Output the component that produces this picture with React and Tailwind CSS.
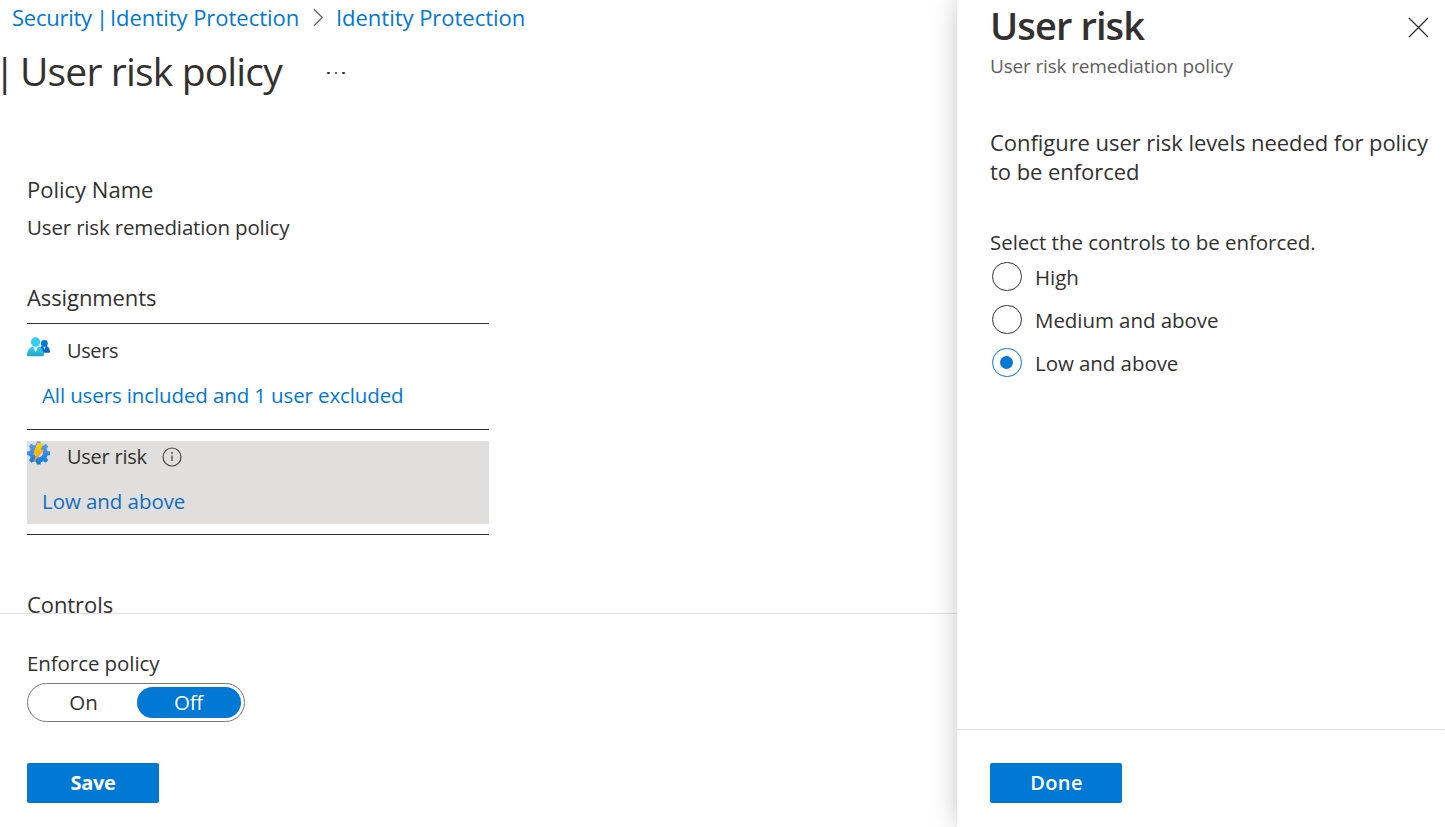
import React, { useState } from "react";

function ChevronIcon() {
  return (
    <svg className="shrink-0" width="12" height="20" viewBox="0 0 12 20" fill="none" stroke="#605e5c" strokeWidth="1.2">
      <path d="M1 2.300 L9.300 10.500 L1 18.700" />
    </svg>
  );
}

function UsersIcon() {
  return (
    <svg className="mt-[2px] shrink-0" width="24" height="20" viewBox="0 0 24 20">
      <defs>
        <linearGradient id="front" x1="0" y1="0" x2="0" y2="1">
          <stop offset="0" stopColor="#35d3f2" />
          <stop offset="1" stopColor="#22a5cb" />
        </linearGradient>
        <linearGradient id="back" x1="0" y1="0" x2="0" y2="1">
          <stop offset="0" stopColor="#0078d4" />
          <stop offset="1" stopColor="#1160c0" />
        </linearGradient>
      </defs>
      <path d="M21.8 15.8c.8 0 1.300-.6 1.200-1.400-.5-3.600-2-6-5.700-6s-5.300 2.600-5.700 7.400z" fill="url(#back)" />
      <path d="M15.700 8.700h3.400l-1.700 3.800z" fill="#fff" fillOpacity=".85" />
      <circle cx="17.400" cy="6.400" r="3.400" fill="#0078d4" />
      <path d="M15.500 19.300c1 0 1.700-.8 1.500-1.800C16.300 12.600 14 9.200 8.500 9.200S.7 12.600 0 17.500c-.1 1 .5 1.800 1.500 1.800z" fill="url(#front)" />
      <path d="M6.100 9.500h4.900l-2.400 6z" fill="#fff" fillOpacity=".9" />
      <circle cx="8.600" cy="5" r="4.700" fill="#32d0ef" />
    </svg>
  );
}

function RiskIcon() {
  return (
    <svg className="shrink-0" width="24" height="24" viewBox="0 0 24 24">
      <defs>
        <linearGradient id="gear" x1="0" y1="0" x2="0" y2="1">
          <stop offset="0" stopColor="#5ea0ef" />
          <stop offset="1" stopColor="#0f78d8" />
        </linearGradient>
        <linearGradient id="bolt" x1="0" y1="0" x2="0" y2="1">
          <stop offset="0" stopColor="#ffd400" />
          <stop offset="1" stopColor="#f78d1e" />
        </linearGradient>
      </defs>
      <path
        d="M9.800 .6h3.600l.7 3 2 .8 2.700-1.600 2.400 2.400-1.600 2.700.8 2 2.700.7v3.400l-2.700.7-.8 2 1.600 2.600-2.400 2.500-2.700-1.600-2 .8-.7 2.500H9.800l-.7-2.500-2-.8-2.700 1.600L2 19.300l1.600-2.600-.8-2L.2 14v-3.400l2.600-.7.8-2L2 5.200l2.400-2.400 2.700 1.600 2-.8z"
        fill="url(#gear)"
      />
      <circle cx="11.600" cy="12" r="4.300" fill="#cfe0f2" />
      <path d="M10.200 2.200h6.800l-3.600 6.600h3.800L6.400 22l3-8.600H5.900z" fill="url(#bolt)" />
    </svg>
  );
}

function InfoIcon() {
  return (
    <svg className="ml-[15.5px] shrink-0" width="20" height="20" viewBox="0 0 20 20" fill="none" stroke="#484644">
      <circle cx="10" cy="10" r="9" strokeWidth="1.200" />
      <path d="M10 8.500v5.500" strokeWidth="1.300" />
      <circle cx="10" cy="6" r=".9" fill="#484644" stroke="none" />
    </svg>
  );
}

const levels = ["High", "Medium and above", "Low and above"];

export default function App() {
  const [level, setLevel] = useState("Low and above");
  const [enforced, setEnforced] = useState(false);

  return (
    <div className="flex h-[827px] w-[1445px] overflow-hidden bg-white font-['Open_Sans','Noto_Sans',sans-serif] text-[#323130]">
      <main className="flex w-[957px] shrink-0 flex-col">
        <div className="h-[613px] shrink-0 overflow-hidden">
          <nav className="flex h-8 items-center pt-[2px] pl-3 text-[22px] leading-[30px] whitespace-nowrap text-[#0078d4]">
            <a className="flex w-[288px]">
              <span className="w-[84px] tracking-[-0.25px]">Security</span>
              <span className="w-[14px]">|</span>
              <span className="tracking-[-0.03px]">Identity Protection</span>
            </a>
            <span className="ml-[13px] flex w-[23px]"><ChevronIcon /></span>
            <a className="tracking-[-0.03px]">Identity Protection</a>
          </nav>

          <header className="mt-[13px] flex h-[52px] items-center whitespace-nowrap">
            <h1 className="flex text-[39px] leading-[52px] tracking-[-0.83px]">
              <span className="-ml-[6px] w-[26px]">|</span>
              <span className="w-[266px]">User risk policy</span>
            </h1>
            <span className="mt-[3px] ml-[41px] flex gap-[5px]">
              <i className="h-[2px] w-[2.500px] rounded-full bg-[#323130]" />
              <i className="h-[2px] w-[2.500px] rounded-full bg-[#323130]" />
              <i className="h-[2px] w-[2.500px] rounded-full bg-[#323130]" />
            </span>
          </header>

          <div className="ml-[27px] w-[462px] pt-[77px]">
            <h2 className="text-[22px] leading-[30px]">Policy Name</h2>
            <p className="mt-2 text-[20.5px] leading-[30px] tracking-[-0.16px]">User risk remediation policy</p>

            <h2 className="mt-10 text-[22px] leading-[30px] tracking-[-0.1px]">Assignments</h2>
            <section className="mt-[11px] border-t border-[#323130] pt-[11px]">
              <div className="h-[83px]">
                <div className="flex h-[30px]">
                  <UsersIcon />
                  <span className="ml-4 pt-px text-[20px] leading-[30px] tracking-[-0.4px]">Users</span>
                </div>
                <a className="mt-[15px] ml-[15px] block text-[20.5px] leading-[30px] tracking-[-0.12px] text-[#0078d4]">
                  All users included and 1 user excluded
                </a>
              </div>
            </section>
            <section className="mt-[11px] border-y border-[#323130] pt-[11px] pb-[10px]">
              <div className="h-[83px] bg-[#e1dfdd]">
                <div className="flex h-[30px]">
                  <RiskIcon />
                  <span className="ml-4 pt-px text-[20px] leading-[30px] tracking-[-0.25px]">User risk</span>
                  <span className="flex pt-[6px]"><InfoIcon /></span>
                </div>
                <a className="mt-[15px] ml-[15px] block text-[20.5px] leading-[30px] tracking-[-0.06px] text-[#106ebe]">Low and above</a>
              </div>
            </section>

            <h2 className="mt-[54px] text-[22px] leading-[30px] tracking-[-0.08px]">Controls</h2>
          </div>
        </div>

        <footer className="grow border-t border-[#e1dfdd] pt-[34px] pl-[27px]">
          <div className="text-[20.5px] leading-[30px] tracking-[-0.08px]">Enforce policy</div>
          <div className="mt-[5px] flex h-[39px] w-[218px] rounded-full border border-[#7a7876] py-[3px] pr-[3px] text-[20.5px] leading-[30px]">
            <button onClick={() => setEnforced(true)} className={enforced ? "flex w-[109px] justify-center rounded-full bg-[#0078d4] text-white" : "flex w-[109px] justify-center pl-[2px]"}>On</button>
            <button onClick={() => setEnforced(false)} className={enforced ? "flex w-[104px] justify-center" : "flex w-[104px] justify-center rounded-full bg-[#0078d4] pr-px tracking-[-0.2px] text-white"}>Off</button>
          </div>
          <button className="mt-[41px] flex h-10 w-[132px] justify-center rounded-[2px] bg-[#0078d4] text-[20px] leading-[39px] font-bold tracking-[-0.3px] text-white">Save</button>
        </footer>
      </main>

      <aside className="flex grow flex-col bg-white shadow-[0_0_24px_rgba(0,0,0,0.22)]">
        <div className="h-[729px] pl-[33px]">
          <header className="flex justify-between pr-[16.5px]">
            <h1 className="text-[38px] leading-[50px] font-semibold tracking-[-0.9px]">User risk</h1>
            <svg className="mt-[17px]" width="21" height="21" viewBox="0 0 21 21" fill="none" stroke="#323130" strokeWidth="1.300">
              <path d="M1 1 L20 20 M20 1 L1 20" />
            </svg>
          </header>
          <p className="mt-px text-[19px] leading-[30px] tracking-[-0.16px] text-[#605e5c]">User risk remediation policy</p>

          <p className="mt-[47px] text-[22px] leading-[29px] tracking-[-0.05px] whitespace-nowrap">
            Configure user risk levels needed for policy
            <br />
            to be enforced
          </p>

          <p className="mt-[41px] text-[20.5px] leading-[30px] tracking-[-0.04px]">Select the controls to be enforced.</p>
          <div className="mt-[5px] flex flex-col gap-[14px] pl-[2px]">
            {levels.map((name) => (
              <label key={name} onClick={() => setLevel(name)} className="flex h-[29px]">
                <span className={level === name ? "flex h-[29px] w-[30px] items-center rounded-full border border-[#0078d4] pl-[7px]" : "h-[29px] w-[30px] rounded-full border border-[#323130]"}>
                  {level === name && <i className="size-[13px] rounded-full bg-[#0078d4]" />}
                </span>
                <span className="ml-[13px] text-[20.5px] leading-[30px] tracking-[-0.06px]">{name}</span>
              </label>
            ))}
          </div>
        </div>
        <footer className="grow border-t border-[#e1dfdd] pt-[33px] pl-[33px]">
          <button className="flex h-10 w-[132px] justify-center rounded-[2px] bg-[#0078d4] pl-px text-[20px] leading-[39px] font-semibold tracking-[0.4px] text-white">Done</button>
        </footer>
      </aside>
    </div>
  );
}
